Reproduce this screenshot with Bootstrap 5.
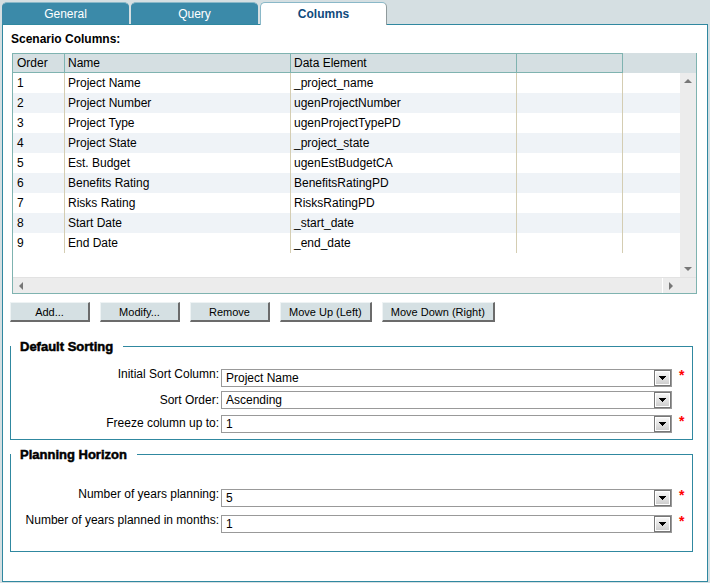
<!DOCTYPE html>
<html lang="en">
<head>
<meta charset="utf-8">
<meta name="viewport" content="width=device-width, initial-scale=1">
<title>Scenario Columns</title>
<link rel="stylesheet" href="https://cdn.jsdelivr.net/npm/bootstrap@5.3.0/dist/css/bootstrap.min.css">
<style>
  :root { --teal: #3b8aa9; --line: #3088a0; --pale: #d5dfe2; --grid: #7fb3b0; }
  body { background: var(--pale); color: #000; font: 12px/20px "Liberation Sans", Arial, sans-serif; padding: 2px 2px 1px; }
  .scenario-tabs { gap: 2px; border: 0; }
  .scenario-tabs .nav-link { width: 127px; height: 22px; padding: 1px 0 0; margin: 0; line-height: 20px; color: #fff; background: var(--teal); border: 1px solid var(--teal); border-top-color: #8ab8c8; border-bottom: 0; border-radius: 5px 5px 0 0; }
  .scenario-tabs .nav-link.active { height: 23px; margin-bottom: -1px; color: #0f4a7c; background: #fff; border-color: #8ab8c8 #8f9a9c #fff #8ab8c8; font-weight: 700; position: relative; z-index: 1; }
  .panel { background: #fff; border: 1px solid var(--line); padding: 4px 14px 29px 7px; }
  .panel-title { font-size: 12px; line-height: 20px; font-weight: 700; margin: 0 0 4px 1px; }
  .grid-box { border: 1px solid var(--grid); margin: 0 -4px 0 2px; border-top: 0; background: #fff; }
  .grid-body { height: 224px; background: linear-gradient(var(--pale) 20px, #fff 20px); }
  .grid-table { table-layout: fixed; border-collapse: separate; border-spacing: 0; margin: 0; color: #000; }
  .grid-table > thead > tr > th, .grid-table > tbody > tr > td { height: 20px; padding: 0 0 0 3px; line-height: 18px; border-width: 0 1px 0 0; border-style: solid; border-color: #d4cdb2; background: none; box-shadow: none; }
  .grid-table > tbody > tr > td { line-height: 20px; }
  .grid-table > thead > tr > th { font-weight: 400; border-width: 1px 1px 1px 0; border-color: var(--grid); }
  .grid-table > * > tr > :first-child { padding-left: 4px; }
  .grid-table > * > tr > :last-child { border-width: 0; }
  .grid-table > tbody > tr:nth-child(even) { background: #eff3f7; }
  .grid-table > thead > tr > th:last-child { border-width: 0; }
  .col-order { width: 52px; } .col-wide { width: 226px; } .col-blank { width: 106px; }
  .bar-v { width: 16px; margin-top: 20px; background: #ececec; }
  .bar-h { height: 16px; background: #ececec; border-top: 1px solid #e2e2e2; }
  .bar-end { width: 34px; border-left: 1px solid #fff; }
  .bar-btn { border: 0; background: none; padding: 0; width: 16px; height: 16px; display: flex; align-items: center; justify-content: center; }
  .bar-btn svg { display: block; fill: #777; }
  .actions { gap: 10px; margin: 8px 0 14px; }
  .actions .btn { min-width: 80px; height: 20px; padding: 0 8px; font-size: 11px; line-height: 18px; color: #000; background: #d5e0e3; border: solid; border-width: 1px 2px 2px 1px; border-color: #eef3f4 #6b6b6b #6b6b6b #eef3f4; border-radius: 0; }
  .group { border: 1px solid var(--line); margin: 0 0 4px; }
  .group legend { float: none; width: auto; margin: 0; padding: 2px 10px 0 9px; font-size: 13px; line-height: 18px; font-weight: 700; -webkit-text-stroke: 0.5px #000; }
  .group-sort { padding-bottom: 6px; }
  .group-sort .fields { padding-top: 9px; }
  .group-plan { padding-bottom: 18px; }
  .group-plan .fields { padding-top: 21px; }
  .field-row { line-height: 18px; }
  .field-row label { width: 208px; margin-right: 2px; text-align: right; }
  .drop { height: 18px; padding: 0 20px 0 4px; line-height: 16px; font-size: 12px; color: #000; border: 1px solid #999; border-radius: 0;
    background: #fff url("data:image/svg+xml,%3Csvg xmlns='http://www.w3.org/2000/svg' width='17' height='16'%3E%3ClinearGradient id='g' x2='0' y2='1'%3E%3Cstop stop-color='%23f6f6f6'/%3E%3Cstop offset='1' stop-color='%23cfcfcf'/%3E%3C/linearGradient%3E%3Cpath d='M0 0h17v16H0z' fill='%23777'/%3E%3Cpath d='M1 1h15v14H1z' fill='white'/%3E%3Cpath d='M2 2h13v12H2z' fill='url(%23g)'/%3E%3Cpath d='M5 6h7v1h-1v1h-1v1H9v1H8V9H7V8H6V7H5z'/%3E%3C/svg%3E") right 0 top 0 / 17px 16px no-repeat; }
  .star { width: 20px; padding-left: 7px; height: 18px; color: #f00; font-size: 14px; font-weight: 700; line-height: 12px; }
  .drop-low .drop, .drop-low .star { margin-top: 4px; }
  .drop-near .drop, .drop-near .star { margin-top: 1px; }
  .gap-a { margin-bottom: 4px; } .gap-b { margin-bottom: 5px; }
</style>
<script src="https://cdn.jsdelivr.net/npm/bootstrap@5.3.0/dist/js/bootstrap.bundle.min.js"></script>
</head>
<body class="d-flex flex-column min-vh-100">
<nav class="nav nav-tabs scenario-tabs align-items-end" aria-label="Scenario sections">
  <a class="nav-link text-center" href="#general">General</a>
  <a class="nav-link text-center" href="#query">Query</a>
  <a class="nav-link active text-center" href="#columns" aria-current="page">Columns</a>
</nav>
<main class="panel flex-grow-1" id="columns">
  <h1 class="panel-title">Scenario Columns:</h1>
  <div class="grid-box">
    <div class="d-flex grid-body">
      <div class="flex-grow-1 overflow-hidden">
        <table class="table grid-table">
          <colgroup><col class="col-order"><col class="col-wide"><col class="col-wide"><col class="col-blank"><col></colgroup>
          <thead><tr><th scope="col">Order</th><th scope="col">Name</th><th scope="col">Data Element</th><th></th><th></th></tr></thead>
          <tbody>
            <tr><td>1</td><td>Project Name</td><td>_project_name</td><td></td><td></td></tr>
            <tr><td>2</td><td>Project Number</td><td>ugenProjectNumber</td><td></td><td></td></tr>
            <tr><td>3</td><td>Project Type</td><td>ugenProjectTypePD</td><td></td><td></td></tr>
            <tr><td>4</td><td>Project State</td><td>_project_state</td><td></td><td></td></tr>
            <tr><td>5</td><td>Est. Budget</td><td>ugenEstBudgetCA</td><td></td><td></td></tr>
            <tr><td>6</td><td>Benefits Rating</td><td>BenefitsRatingPD</td><td></td><td></td></tr>
            <tr><td>7</td><td>Risks Rating</td><td>RisksRatingPD</td><td></td><td></td></tr>
            <tr><td>8</td><td>Start Date</td><td>_start_date</td><td></td><td></td></tr>
            <tr><td>9</td><td>End Date</td><td>_end_date</td><td></td><td></td></tr>
          </tbody>
        </table>
      </div>
      <div class="bar-v d-flex flex-column justify-content-between">
        <button type="button" class="bar-btn" aria-label="Scroll up"><svg width="8" height="4"><path d="M4 0 8 4H0z"/></svg></button>
        <button type="button" class="bar-btn" aria-label="Scroll down"><svg width="8" height="4"><path d="M0 0h8L4 4z"/></svg></button>
      </div>
    </div>
    <div class="bar-h d-flex justify-content-between">
      <button type="button" class="bar-btn" aria-label="Scroll left"><svg width="4" height="8"><path d="M4 0v8L0 4z"/></svg></button>
      <div class="bar-end"><button type="button" class="bar-btn" aria-label="Scroll right"><svg width="4" height="8"><path d="M0 0v8l4-4z"/></svg></button></div>
    </div>
  </div>
  <div class="d-flex flex-wrap actions">
    <button type="button" class="btn">Add...</button>
    <button type="button" class="btn">Modify...</button>
    <button type="button" class="btn">Remove</button>
    <button type="button" class="btn">Move Up (Left)</button>
    <button type="button" class="btn">Move Down (Right)</button>
  </div>
  <fieldset class="group group-sort">
    <legend>Default Sorting</legend>
    <div class="fields">
      <div class="d-flex field-row drop-low gap-a"><label for="sortColumn">Initial Sort Column:</label><select id="sortColumn" class="form-select drop flex-fill w-auto" required><option>Project Name</option></select><span class="star">*</span></div>
      <div class="d-flex field-row gap-b"><label for="sortOrder">Sort Order:</label><select id="sortOrder" class="form-select drop flex-fill w-auto"><option>Ascending</option><option>Descending</option></select><span class="star"></span></div>
      <div class="d-flex field-row drop-near"><label for="freeze">Freeze column up to:</label><select id="freeze" class="form-select drop flex-fill w-auto" required><option>1</option></select><span class="star">*</span></div>
    </div>
  </fieldset>
  <fieldset class="group group-plan mb-0">
    <legend>Planning Horizon</legend>
    <div class="fields">
      <div class="d-flex field-row drop-low gap-a"><label for="years">Number of years planning:</label><select id="years" class="form-select drop flex-fill w-auto" required><option>5</option></select><span class="star">*</span></div>
      <div class="d-flex field-row drop-low"><label for="months">Number of years planned in months:</label><select id="months" class="form-select drop flex-fill w-auto" required><option>1</option></select><span class="star">*</span></div>
    </div>
  </fieldset>
</main>
</body>
</html>
